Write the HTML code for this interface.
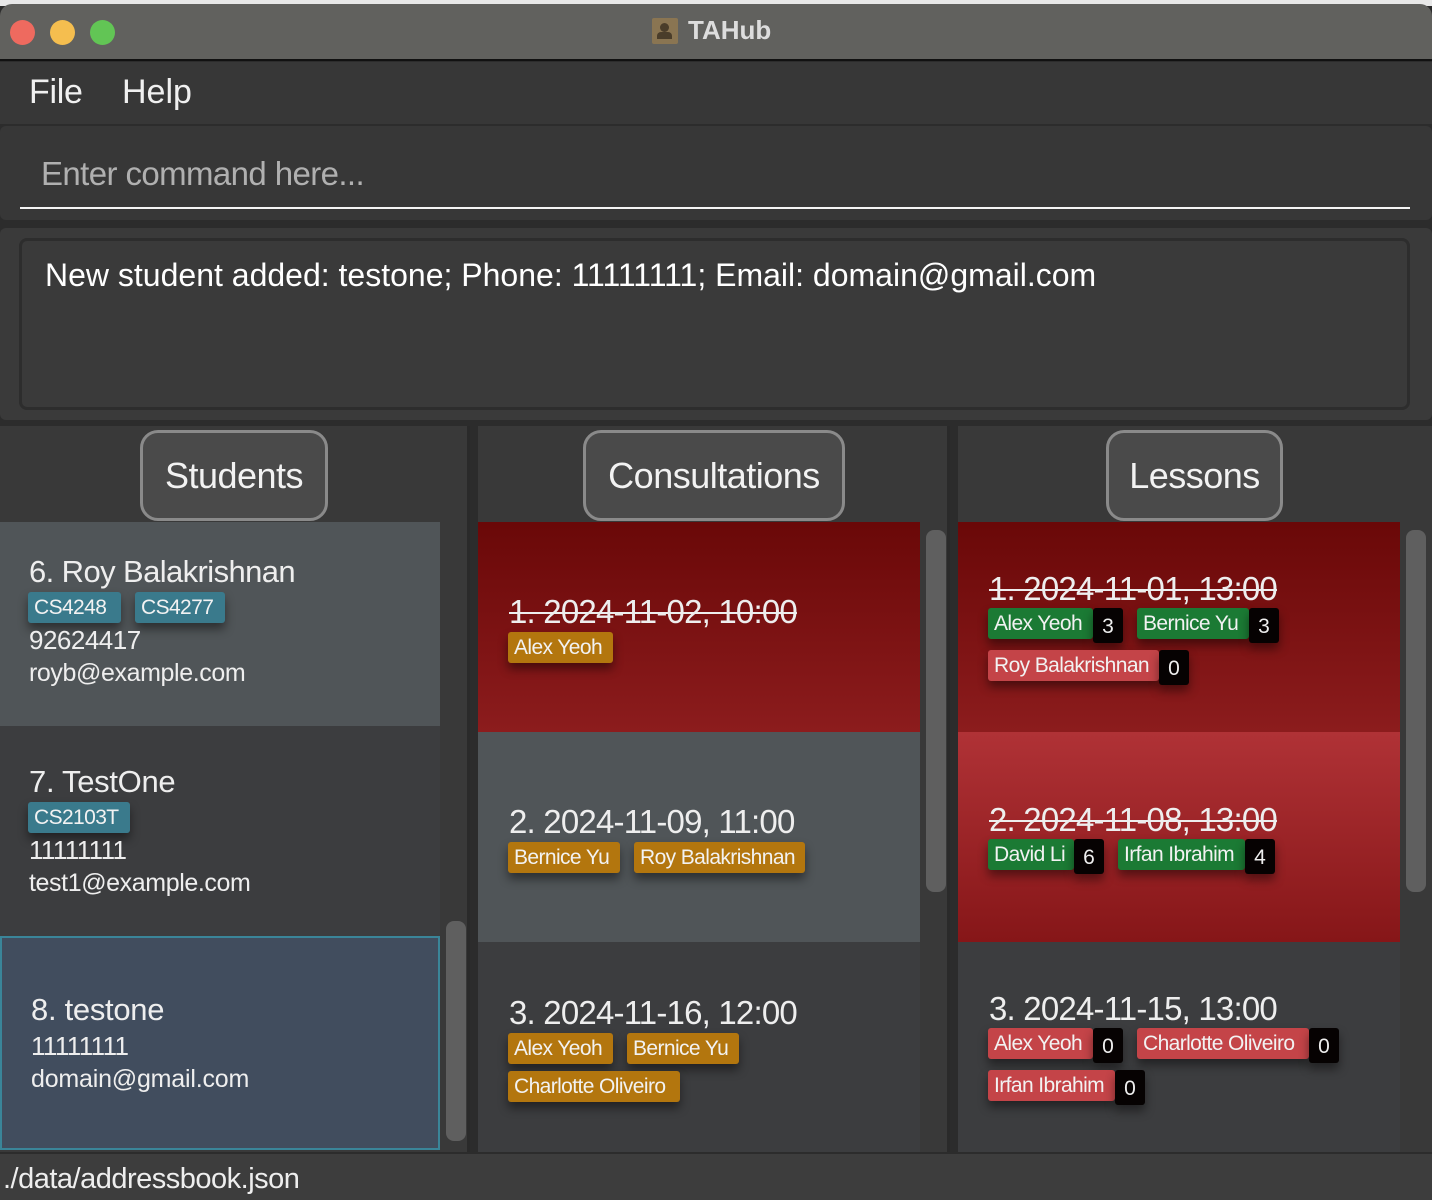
<!DOCTYPE html>
<html><head><meta charset="utf-8"><style>
*{margin:0;padding:0;box-sizing:border-box}
body{width:1432px;height:1200px;background:#2c2c2c;font-family:"Liberation Sans",sans-serif;color:#eee;position:relative;overflow:hidden}
.a{position:absolute}
.t{position:absolute;white-space:nowrap;line-height:1}
.tag{position:absolute;height:31px;border-radius:3px;font-size:21px;line-height:31px;padding-left:6px;white-space:nowrap;overflow:hidden;color:#f2f2f2;box-shadow:0 6px 10px rgba(0,0,0,.45);letter-spacing:-0.6px}
.s{background:#3a7a8c}
.o{background:#b3760e}
.g{background:#1b7a34}
.r{background:#c44448}
.c{position:absolute;height:35px;width:30px;background:#060202;border-radius:3px;font-size:21px;line-height:37px;text-align:center;color:#eee;box-shadow:0 6px 10px rgba(0,0,0,.45)}
.hdr{position:absolute;top:430px;height:91px;background:#4a4a4a;border:3px solid #8a8a8a;border-radius:18px;font-size:36px;line-height:86px;text-align:center;color:#f2f2f2;letter-spacing:-0.5px}
.strike{text-decoration:line-through;text-decoration-thickness:2px}
.sb{position:absolute;width:20px;background:#5f5f5f;border-radius:8px}
.d{font-size:33px;letter-spacing:-0.8px}
</style></head><body>
<div class="a" style="left:0;top:0;width:1432px;height:6px;background:#e8e8e8"></div>
<div class="a" style="left:0;top:4px;width:1432px;height:57px;background:#61615e;border-radius:12px 12px 0 0;border-bottom:2px solid #111"></div>
<div class="a" style="left:10px;top:20px;width:25px;height:25px;border-radius:50%;background:#ee6a5f"></div>
<div class="a" style="left:50px;top:20px;width:25px;height:25px;border-radius:50%;background:#f5be4f"></div>
<div class="a" style="left:90px;top:20px;width:25px;height:25px;border-radius:50%;background:#62c555"></div>
<div class="a" style="left:652px;top:18px;width:26px;height:26px;background:#8a7552;border-radius:2px"><div class="a" style="left:8px;top:5px;width:9px;height:9px;border-radius:50%;background:#4a3d2a"></div><div class="a" style="left:5px;top:14px;width:15px;height:7px;background:#4a3d2a;border-radius:4px 4px 0 0"></div></div>
<div class="t" style="left:688px;top:17px;font-size:26px;font-weight:bold;color:#ddd">TAHub</div>
<div class="a" style="left:0;top:62px;width:1432px;height:62px;background:#373737"></div>
<div class="t" style="left:29px;top:75px;font-size:34px;color:#f0f0f0;letter-spacing:-0.3px">File</div>
<div class="t" style="left:122px;top:75px;font-size:34px;color:#f0f0f0;letter-spacing:0px">Help</div>
<div class="a" style="left:0;top:126px;width:1432px;height:94px;background:#373737;border-radius:6px"></div>
<div class="t" style="left:41px;top:157px;font-size:33px;color:#b0b0b0;letter-spacing:-0.6px">Enter command here...</div>
<div class="a" style="left:20px;top:207px;width:1390px;height:2px;background:#f4f4f4"></div>
<div class="a" style="left:0;top:228px;width:1432px;height:192px;background:#3a3a3a;border-radius:6px"></div>
<div class="a" style="left:19px;top:238px;width:1391px;height:172px;background:#3a3a3a;border:3px solid #2d2d2d;border-radius:8px"></div>
<div class="t" style="left:45px;top:259px;font-size:32px;color:#fff;letter-spacing:0px">New student added: testone; Phone: 11111111; Email: domain@gmail.com</div>
<div class="a" style="left:0;top:426px;width:470px;height:726px;background:#393939;border-right:3px solid #2a2a2a"></div>
<div class="a" style="left:478px;top:426px;width:472px;height:726px;background:#393939;border-right:3px solid #2a2a2a"></div>
<div class="a" style="left:958px;top:426px;width:474px;height:726px;background:#393939"></div>
<div class="hdr" style="left:140px;width:188px">Students</div>
<div class="hdr" style="left:583px;width:262px">Consultations</div>
<div class="hdr" style="left:1106px;width:177px">Lessons</div>

<div class="a" style="left:0;top:522px;width:440px;height:204px;background:#505558"></div>
<div class="a" style="left:0;top:726px;width:440px;height:210px;background:#3c3d3f"></div>
<div class="a" style="left:0;top:936px;width:440px;height:214px;background:#414d5e;border:2px solid #3a8599"></div>
<div class="sb" style="left:446px;top:921px;height:220px"></div>
<div class="t" style="left:29px;top:556px;font-size:31px;letter-spacing:-0.6px">6. Roy Balakrishnan</div>
<div class="tag s" style="left:28px;top:592px;width:93px">CS4248</div>
<div class="tag s" style="left:135px;top:592px;width:90px">CS4277</div>
<div class="t" style="left:29px;top:627px;font-size:26px;letter-spacing:-0.5px">92624417</div>
<div class="t" style="left:29px;top:661px;font-size:25px;letter-spacing:-0.4px">royb@example.com</div>
<div class="t" style="left:29px;top:766px;font-size:31px;letter-spacing:-0.3px">7. TestOne</div>
<div class="tag s" style="left:28px;top:802px;width:102px">CS2103T</div>
<div class="t" style="left:29px;top:837px;font-size:26px;letter-spacing:-0.6px">11111111</div>
<div class="t" style="left:29px;top:871px;font-size:25px;letter-spacing:-0.4px">test1@example.com</div>
<div class="t" style="left:31px;top:994px;font-size:31px;letter-spacing:-0.3px">8. testone</div>
<div class="t" style="left:31px;top:1033px;font-size:26px;letter-spacing:-0.6px">11111111</div>
<div class="t" style="left:31px;top:1067px;font-size:25px;letter-spacing:-0.2px">domain@gmail.com</div>

<div class="a" style="left:478px;top:522px;width:442px;height:210px;background:linear-gradient(#6a0808,#8c1c1d)"></div>
<div class="a" style="left:478px;top:732px;width:442px;height:210px;background:#505558"></div>
<div class="a" style="left:478px;top:942px;width:442px;height:210px;background:#3c3d3f"></div>
<div class="sb" style="left:926px;top:530px;height:362px"></div>
<div class="t strike d" style="left:509px;top:595px">1. 2024-11-02, 10:00</div>
<div class="tag o" style="left:508px;top:632px;width:105px">Alex Yeoh</div>
<div class="t d" style="left:509px;top:805px">2. 2024-11-09, 11:00</div>
<div class="tag o" style="left:508px;top:842px;width:112px">Bernice Yu</div>
<div class="tag o" style="left:634px;top:842px;width:171px">Roy Balakrishnan</div>
<div class="t d" style="left:509px;top:996px">3. 2024-11-16, 12:00</div>
<div class="tag o" style="left:508px;top:1033px;width:105px">Alex Yeoh</div>
<div class="tag o" style="left:627px;top:1033px;width:112px">Bernice Yu</div>
<div class="tag o" style="left:508px;top:1071px;width:172px">Charlotte Oliveiro</div>

<div class="a" style="left:958px;top:522px;width:442px;height:210px;background:linear-gradient(#6a0808,#8c1c1d)"></div>
<div class="a" style="left:958px;top:732px;width:442px;height:210px;background:linear-gradient(#b03236,#861618)"></div>
<div class="a" style="left:958px;top:942px;width:442px;height:210px;background:#3c3d3f"></div>
<div class="sb" style="left:1406px;top:530px;height:362px"></div>
<div class="t strike d" style="left:989px;top:572px">1. 2024-11-01, 13:00</div>
<div class="tag g" style="left:988px;top:608px;width:105px">Alex Yeoh</div><div class="c" style="left:1093px;top:608px">3</div>
<div class="tag g" style="left:1137px;top:608px;width:112px">Bernice Yu</div><div class="c" style="left:1249px;top:608px">3</div>
<div class="tag r" style="left:988px;top:650px;width:171px">Roy Balakrishnan</div><div class="c" style="left:1159px;top:650px">0</div>
<div class="t strike d" style="left:989px;top:803px">2. 2024-11-08, 13:00</div>
<div class="tag g" style="left:988px;top:839px;width:86px">David Li</div><div class="c" style="left:1074px;top:839px">6</div>
<div class="tag g" style="left:1118px;top:839px;width:127px">Irfan Ibrahim</div><div class="c" style="left:1245px;top:839px">4</div>
<div class="t d" style="left:989px;top:992px">3. 2024-11-15, 13:00</div>
<div class="tag r" style="left:988px;top:1028px;width:105px">Alex Yeoh</div><div class="c" style="left:1093px;top:1028px">0</div>
<div class="tag r" style="left:1137px;top:1028px;width:172px">Charlotte Oliveiro</div><div class="c" style="left:1309px;top:1028px">0</div>
<div class="tag r" style="left:988px;top:1070px;width:127px">Irfan Ibrahim</div><div class="c" style="left:1115px;top:1070px">0</div>

<div class="a" style="left:0;top:1154px;width:1432px;height:46px;background:#3d3d3d"></div>
<div class="t" style="left:3px;top:1165px;font-size:29px;letter-spacing:-0.5px">./data/addressbook.json</div>
</body></html>
